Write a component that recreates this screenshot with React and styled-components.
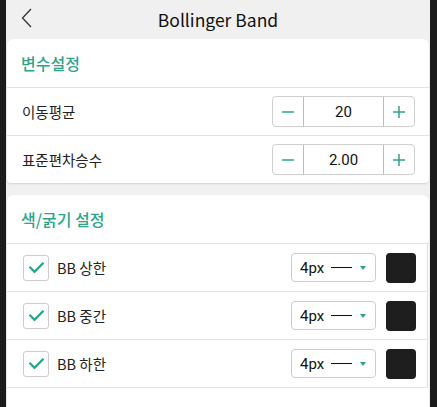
import React from "react";
import styled, { createGlobalStyle } from "styled-components";

const Global = createGlobalStyle`
  html, body { margin: 0; padding: 0; background: #1b1b1b; }
  body { font-family: "Noto Sans CJK KR", "Noto Sans", sans-serif; }
`;

const TEAL = "#2ba58a";

const Phone = styled.div`
  width: 424px;
  height: 407px;
  margin-left: 6px;
  background: #f0f0f0;
  overflow: hidden;
  display: flex;
  flex-direction: column;
`;

const Header = styled.div`
  height: 38px;
  flex: none;
  display: flex;
  align-items: center;
  justify-content: center;
  position: relative;
  font-family: "Noto Sans CJK KR", sans-serif;
  font-size: 17.5px;
  font-weight: 400;
  color: #111;
`;

const Back = styled.button`
  position: absolute;
  left: 14px;
  top: 8px;
  width: 12px;
  height: 20px;
  padding: 0;
  border: 0;
  background: none;
  display: flex;
  align-items: center;
  justify-content: center;
`;

const Body = styled.div`
  flex: 1;
  display: flex;
  flex-direction: column;
  gap: 12px;
  padding: 1px 1px 0 1px;
`;

const Card = styled.section`
  background: #fff;
  border-radius: 6px 6px ${(p) => (p.$open ? "0 0" : "4px 4px")};
  box-shadow: 0 1px 2px rgba(0, 0, 0, 0.12);
  display: flex;
  flex-direction: column;
  flex: ${(p) => (p.$open ? 1 : "none")};
`;

const CardTitle = styled.div`
  height: 48px;
  display: flex;
  align-items: center;
  padding-left: 14px;
  font-family: "Noto Sans CJK KR", sans-serif;
  font-size: 16px;
  font-weight: 500;
  color: ${TEAL};
  border-bottom: 1px solid #e2e2e2;
`;

const Row = styled.div`
  height: 47px;
  display: flex;
  align-items: center;
  padding: 0 ${(p) => (p.$edge ? 11 : 14)}px 0 15px;
  border-bottom: ${(p) => (p.$last ? "none" : "1px solid #e2e2e2")};
  border-right: ${(p) => (p.$edge ? "1px solid #dcdcdc" : "none")};
  margin-right: ${(p) => (p.$edge ? "1px" : "0")};
`;

const Label = styled.span`
  flex: 1;
  font-family: "Noto Sans CJK KR", sans-serif;
  font-size: 14.5px;
  color: #222;
  margin-left: ${(p) => p.$indent || 0}px;
`;

const Stepper = styled.div`
  width: 141px;
  height: 29px;
  border: 1px solid #cfcfcf;
  border-radius: 4px;
  display: flex;
`;

const StepBtn = styled.button`
  width: 30px;
  border: 0;
  background: none;
  padding: 0;
  display: flex;
  align-items: center;
  justify-content: center;
`;

const StepValue = styled.div`
  flex: 1;
  border-left: 1px solid #bdbdbd;
  border-right: 1px solid #bdbdbd;
  display: flex;
  align-items: center;
  justify-content: center;
  font-family: "Roboto", sans-serif;
  font-size: 15px;
  color: #111;
`;

const Check = styled.span`
  width: 24px;
  height: 24px;
  border: 1px solid #cdcdcd;
  border-radius: 3px;
  display: flex;
  align-items: center;
  justify-content: center;
  flex: none;
  margin-left: 1px;
`;

const Select = styled.div`
  width: 85px;
  height: 29px;
  border: 1px solid #cdcdcd;
  border-radius: 4px;
  display: flex;
  align-items: center;
  padding-left: 8px;
  box-sizing: border-box;
  font-family: "Roboto", sans-serif;
  font-size: 15px;
  color: #111;
  gap: 7px;
  margin-right: 10px;
`;

const Dash = styled.span`
  width: 21px;
  height: 1.5px;
  background: #111;
`;

const Caret = styled.span`
  margin-left: auto;
  margin-right: 9px;
  width: 0;
  height: 0;
  border-left: 3.5px solid transparent;
  border-right: 3.5px solid transparent;
  border-top: 4px solid ${TEAL};
`;

const Swatch = styled.span`
  width: 30px;
  height: 30px;
  border-radius: 4px;
  background: ${(p) => p.$color};
  flex: none;
`;

const Minus = () => (
  <svg width="14" height="14" viewBox="0 0 14 14">
    <path d="M1 7h12" stroke={TEAL} strokeWidth="1.5" />
  </svg>
);
const Plus = () => (
  <svg width="14" height="14" viewBox="0 0 14 14">
    <path d="M1 7h12M7 1v12" stroke={TEAL} strokeWidth="1.5" />
  </svg>
);
const Tick = () => (
  <svg width="17" height="13" viewBox="0 0 17 13">
    <path d="M1.5 5.8l5 5 9-9" fill="none" stroke={TEAL} strokeWidth="2.3" />
  </svg>
);

const params = [
  { label: "이동평균", value: "20" },
  { label: "표준편차승수", value: "2.00" },
];
const lines = ["BB 상한", "BB 중간", "BB 하한"];

export default function App() {
  return (
    <>
      <Global />
      <Phone>
        <Header>
          <Back aria-label="back">
            <svg width="11" height="20" viewBox="0 0 11 20">
              <path d="M10 1L1.5 10 10 19" fill="none" stroke="#333" strokeWidth="1.3" />
            </svg>
          </Back>
          Bollinger Band
        </Header>
        <Body>
          <Card>
            <CardTitle>변수설정</CardTitle>
            {params.map((p, i) => (
              <Row key={p.label} $last={i === params.length - 1}>
                <Label>{p.label}</Label>
                <Stepper>
                  <StepBtn><Minus /></StepBtn>
                  <StepValue>{p.value}</StepValue>
                  <StepBtn><Plus /></StepBtn>
                </Stepper>
              </Row>
            ))}
          </Card>
          <Card $open>
            <CardTitle>색/굵기 설정</CardTitle>
            {lines.map((l) => (
              <Row key={l} $edge>
                <Check><Tick /></Check>
                <Label $indent={8}>{l}</Label>
                <Select>
                  4px <Dash />
                  <Caret />
                </Select>
                <Swatch $color="#1e1e1e" />
              </Row>
            ))}
          </Card>
        </Body>
      </Phone>
    </>
  );
}
